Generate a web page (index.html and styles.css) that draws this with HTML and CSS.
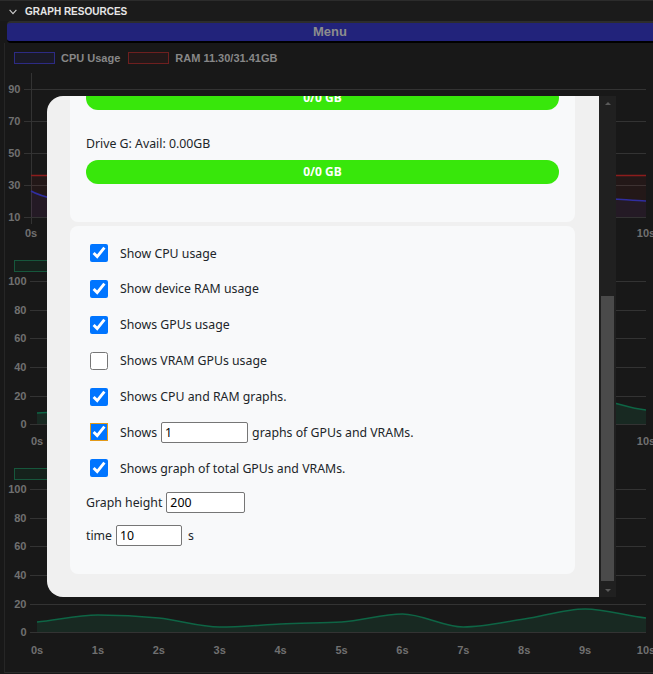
FILE: index.html
```html
<!DOCTYPE html>
<html>
<head>
<meta charset="utf-8">
<title>Graph Resources</title>
<link rel="stylesheet" href="styles.css">
</head>
<body>
<div class="header">
  <svg class="chev" width="8" height="6" viewBox="0 0 8 6"><polyline points="0.6,0.8 4,4.6 7.4,0.8" fill="none" stroke="#cfcfcf" stroke-width="1.1"/></svg>
  <span class="title">GRAPH RESOURCES</span>
</div>
<div class="menu">Menu</div>
<div class="graphs">
  <div class="chart chart-first">
    <div class="legend">
      <span class="lg-box lg-cpu"></span><span class="lg-text">CPU Usage</span>
      <span class="lg-box lg-ram"></span><span class="lg-text">RAM 11.30/31.41GB</span>
    </div>
    <svg class="plot" viewBox="5 0 648 186">
      <g stroke="#333333" stroke-width="1">
        <line x1="24" y1="25.5" x2="646" y2="25.5"/>
        <line x1="24" y1="57.5" x2="646" y2="57.5"/>
        <line x1="24" y1="89.5" x2="646" y2="89.5"/>
        <line x1="24" y1="121.5" x2="646" y2="121.5"/>
        <line x1="24" y1="153.5" x2="646" y2="153.5"/>
        <line x1="31.5" y1="9" x2="31.5" y2="160"/>
      </g>
      <rect x="31" y="111" width="615" height="42" fill="#ff2020" fill-opacity="0.05"/>
      <path d="M31,127 C41,133 72,140 92.5,140 S133,138 154,138 S195,135 215.5,135 S256,137 277,137 S318,133 338.5,133 S379,136 400,136 S441,134 461.5,134 S502,138 523,138 S564,134 584.5,134 S626,136 646,137 L646,153 L31,153 Z" fill="#4a40ff" fill-opacity="0.06"/>
      <line x1="31" y1="111.5" x2="646" y2="111.5" stroke="#8c1c1c" stroke-width="1.5"/>
      <path d="M31,127 C41,133 72,140 92.5,140 S133,138 154,138 S195,135 215.5,135 S256,137 277,137 S318,133 338.5,133 S379,136 400,136 S441,134 461.5,134 S502,138 523,138 S564,134 584.5,134 S626,136 646,137" fill="none" stroke="#302ea0" stroke-width="1.5"/>
      <g class="ylab" text-anchor="end">
        <text x="20.5" y="29">90</text>
        <text x="20.5" y="61">70</text>
        <text x="20.5" y="93">50</text>
        <text x="20.5" y="125">30</text>
        <text x="20.5" y="157">10</text>
      </g>
      <g class="xlab" text-anchor="middle">
        <text x="31" y="173">0s</text>
        <text x="646" y="173">10s</text>
      </g>
    </svg>
  </div>

  <div class="chart">
    <div class="legend">
      <span class="lg-box lg-gpu"></span>
    </div>
    <svg class="plot" viewBox="5 0 648 186">
      <g stroke="#333333" stroke-width="1">
        <line x1="30" y1="9.5" x2="646" y2="9.5"/>
        <line x1="30" y1="38.5" x2="646" y2="38.5"/>
        <line x1="30" y1="66.5" x2="646" y2="66.5"/>
        <line x1="30" y1="95.5" x2="646" y2="95.5"/>
        <line x1="30" y1="124.5" x2="646" y2="124.5"/>
        <line x1="30" y1="152.5" x2="646" y2="152.5"/>
      </g>
      <path d="M37,141 C57,140.5 78,139 97.9,139 S138.8,140 158.8,140 S199.7,143 219.7,143 S260.6,142 280.6,142 S321.5,140 341.5,140 S382.4,137 402.4,137 S443.3,141 463.3,141 S504.2,136 524.2,135 S565.1,126 585.1,126 S626,136 646,138 L646,152 L37,152 Z" fill="#1c6a48" fill-opacity="0.22"/>
      <path d="M37,141 C57,140.5 78,139 97.9,139 S138.8,140 158.8,140 S199.7,143 219.7,143 S260.6,142 280.6,142 S321.5,140 341.5,140 S382.4,137 402.4,137 S443.3,141 463.3,141 S504.2,136 524.2,135 S565.1,126 585.1,126 S626,136 646,138" fill="none" stroke="#0e6545" stroke-width="1.5"/>
      <g class="ylab" text-anchor="end">
        <text x="26.5" y="13">100</text>
        <text x="26.5" y="42">80</text>
        <text x="26.5" y="70">60</text>
        <text x="26.5" y="99">40</text>
        <text x="26.5" y="128">20</text>
        <text x="26.5" y="156">0</text>
      </g>
      <g class="xlab" text-anchor="middle">
        <text x="37" y="173">0s</text>
        <text x="646" y="173">10s</text>
      </g>
    </svg>
  </div>

  <div class="chart">
    <div class="legend">
      <span class="lg-box lg-gpu"></span>
    </div>
    <svg class="plot" viewBox="5 0 648 186">
      <g stroke="#333333" stroke-width="1">
        <line x1="30" y1="9.5" x2="646" y2="9.5"/>
        <line x1="30" y1="38.5" x2="646" y2="38.5"/>
        <line x1="30" y1="66.5" x2="646" y2="66.5"/>
        <line x1="30" y1="95.5" x2="646" y2="95.5"/>
        <line x1="30" y1="124.5" x2="646" y2="124.5"/>
        <line x1="30" y1="152.5" x2="646" y2="152.5"/>
      </g>
      <path d="M37,142 C57,140 78,135 97.9,135 S138.8,136 158.8,138 S199.7,147 219.7,147 S260.6,145 280.6,144 S321.5,143 341.5,142 S382.4,134 402.4,134 S443.3,147 463.3,147 S504.2,142 524.2,139 S565.1,129 585.1,129 S626,136 646,138 L646,152 L37,152 Z" fill="#1c6a48" fill-opacity="0.22"/>
      <path d="M37,142 C57,140 78,135 97.9,135 S138.8,136 158.8,138 S199.7,147 219.7,147 S260.6,145 280.6,144 S321.5,143 341.5,142 S382.4,134 402.4,134 S443.3,147 463.3,147 S504.2,142 524.2,139 S565.1,129 585.1,129 S626,136 646,138" fill="none" stroke="#0e6545" stroke-width="1.5"/>
      <g class="ylab" text-anchor="end">
        <text x="26.5" y="13">100</text>
        <text x="26.5" y="42">80</text>
        <text x="26.5" y="70">60</text>
        <text x="26.5" y="99">40</text>
        <text x="26.5" y="128">20</text>
        <text x="26.5" y="156">0</text>
      </g>
      <g class="xlab" text-anchor="middle">
        <text x="37" y="174">0s</text>
        <text x="97.9" y="174">1s</text>
        <text x="158.8" y="174">2s</text>
        <text x="219.7" y="174">3s</text>
        <text x="280.6" y="174">4s</text>
        <text x="341.5" y="174">5s</text>
        <text x="402.4" y="174">6s</text>
        <text x="463.3" y="174">7s</text>
        <text x="524.2" y="174">8s</text>
        <text x="585.1" y="174">9s</text>
        <text x="646" y="174">10s</text>
      </g>
    </svg>
  </div>
</div>

<div class="modal">
  <div class="modal-body">
    <div class="scroll-inner">
      <div class="card card-drives">
        <div class="drive">
          <div class="bar bar-first">0/0 GB</div>
        </div>
        <div class="drive">
          <div class="drive-label">Drive G: Avail: 0.00GB</div>
          <div class="bar">0/0 GB</div>
        </div>
      </div>
      <div class="card card-options">
        <label class="check-row"><input class="check" type="checkbox" checked><span>Show CPU usage</span></label>
        <label class="check-row"><input class="check" type="checkbox" checked><span>Show device RAM usage</span></label>
        <label class="check-row"><input class="check" type="checkbox" checked><span>Shows GPUs usage</span></label>
        <label class="check-row"><input class="check" type="checkbox"><span>Shows VRAM GPUs usage</span></label>
        <label class="check-row"><input class="check" type="checkbox" checked><span>Shows CPU and RAM graphs.</span></label>
        <div class="check-row"><input class="check check-focus" type="checkbox" checked><span class="inline">Shows <input class="inp inp-count" type="text" value="1"> graphs of GPUs and VRAMs.</span></div>
        <label class="check-row"><input class="check" type="checkbox" checked><span>Shows graph of total GPUs and VRAMs.</span></label>
        <div class="field-row field-first">Graph height <input class="inp inp-height" type="text" value="200"></div>
        <div class="field-row field-second">time <input class="inp inp-time" type="text" value="10"> <span class="unit">s</span></div>
      </div>
    </div>
  </div>
  <div class="scrollbar">
    <div class="sb-btn sb-up"></div>
    <div class="sb-track"><div class="sb-thumb"></div></div>
    <div class="sb-btn sb-down"></div>
  </div>
</div>
</body>
</html>
```

FILE: styles.css
```css
* { box-sizing: border-box; }
html, body { margin: 0; }
body {
  background: #181818;
  width: 653px;
  height: 674px;
  overflow: hidden;
  position: relative;
  font-family: "Liberation Sans", Arial, sans-serif;
}

.header {
  height: 21px;
  border-top: 1px solid #2c2c2c;
  background: #1b1b1b;
  display: flex;
  align-items: center;
  padding-left: 9px;
  gap: 8px;
}
.chev { display: block; margin-top: 1px; }
.title {
  color: #e6e6e6;
  font-size: 10px;
  font-weight: bold;
}

.menu {
  margin-left: 7px;
  height: 22px;
  border-top: 2px solid #2d2d2d;
  border-bottom: 2px solid #000;
  background: #22237b;
  border-radius: 4px 0 0 4px;
  color: #8d8d8d;
  font-weight: bold;
  font-size: 13px;
  line-height: 18px;
  text-align: center;
}

.graphs {
  margin-left: 4px;
  border-left: 1px solid #262626;
  border-bottom: 1px solid #2a2a2a;
  padding-bottom: 6px;
}
.chart { height: 208px; padding-top: 10px; }
.chart-first { height: 207px; padding-top: 9px; }
.legend {
  display: flex;
  align-items: center;
  height: 12px;
  padding-left: 9px;
  font-size: 11px;
  font-weight: bold;
  color: #878787;
  white-space: nowrap;
}
.lg-box {
  width: 41px;
  height: 12px;
  border: 1px solid;
  margin-right: 6px;
  flex: none;
}
.lg-cpu { border-color: #2d2b84; background: #1a1a27; }
.lg-ram { border-color: #6e1f1f; background: #231818; }
.lg-gpu { border-color: #16573c; background: #15221c; }
.lg-text { margin-right: 8px; line-height: 12px; }
.plot { display: block; width: 648px; height: 186px; }
.ylab, .xlab {
  font-family: "Liberation Sans", Arial, sans-serif;
  font-size: 11px;
  font-weight: bold;
  fill: #707070;
}

.modal {
  position: absolute;
  left: 47px;
  top: 96px;
  width: 569px;
  height: 501px;
  display: flex;
  border-radius: 16px 0 0 16px;
  overflow: hidden;
  background: #f0f0f0;
}
.modal-body {
  flex: 1;
  overflow: hidden;
  padding: 0 24px 0 23px;
  font-family: "Noto Sans", "Open Sans", sans-serif;
  font-size: 12.3px;
  color: #212529;
}
.scroll-inner { margin-top: -26px; }
.card { background: #f8f9fa; border-radius: 8px; }
.card-drives { padding: 16px 16px 13px; }
.drive { margin-bottom: 25px; }
.drive-label { height: 18px; line-height: 18px; }
.bar {
  margin-top: 7px;
  height: 24px;
  border-radius: 12px;
  background: #38e70b;
  color: #fff;
  font-weight: bold;
  font-size: 12px;
  line-height: 24px;
  text-align: center;
}
.bar-first { margin-top: 0; }
.card-options {
  margin-top: 4px;
  padding: 18px 16px 28px;
  display: flex;
  flex-direction: column;
}
.check-row {
  display: flex;
  align-items: center;
  gap: 12px;
  height: 18px;
  padding-left: 4px;
}
.check-row + .check-row { margin-top: 17.9px; }
.check { width: 18px; height: 18px; margin: 0; flex: none; }
.check-focus { outline: 1px solid #e39a18; outline-offset: -1px; }
.inline { display: flex; align-items: center; gap: 4px; white-space: nowrap; }
.field-row {
  display: flex;
  align-items: center;
  gap: 4px;
  height: 21px;
}
.field-first { margin-top: 14.5px; }
.field-second { margin-top: 12px; }
.inp {
  height: 21px;
  border: 1px solid #767676;
  border-radius: 2px;
  padding: 0 3px;
  font-family: "Noto Sans", "Open Sans", sans-serif;
  font-size: 12.3px;
  color: #000;
  background: #fff;
  margin: 0;
}
.inp-count { width: 87px; }
.inp-height { width: 79px; }
.inp-time { width: 66px; }
.unit { margin-left: 2px; }

.scrollbar {
  width: 17px;
  flex: none;
  background: #202020;
  display: flex;
  flex-direction: column;
}
.sb-btn {
  height: 14px;
  display: flex;
  align-items: center;
  justify-content: center;
}
.sb-up::before {
  content: "";
  border-left: 3px solid transparent;
  border-right: 3px solid transparent;
  border-bottom: 3px solid #5a5a5a;
}
.sb-down::before {
  content: "";
  border-left: 3px solid transparent;
  border-right: 3px solid transparent;
  border-top: 3px solid #5a5a5a;
}
.sb-track { flex: 1; padding: 0 2px; }
.sb-thumb { margin-top: 186px; height: 285px; background: #4a4a4a; }
```
